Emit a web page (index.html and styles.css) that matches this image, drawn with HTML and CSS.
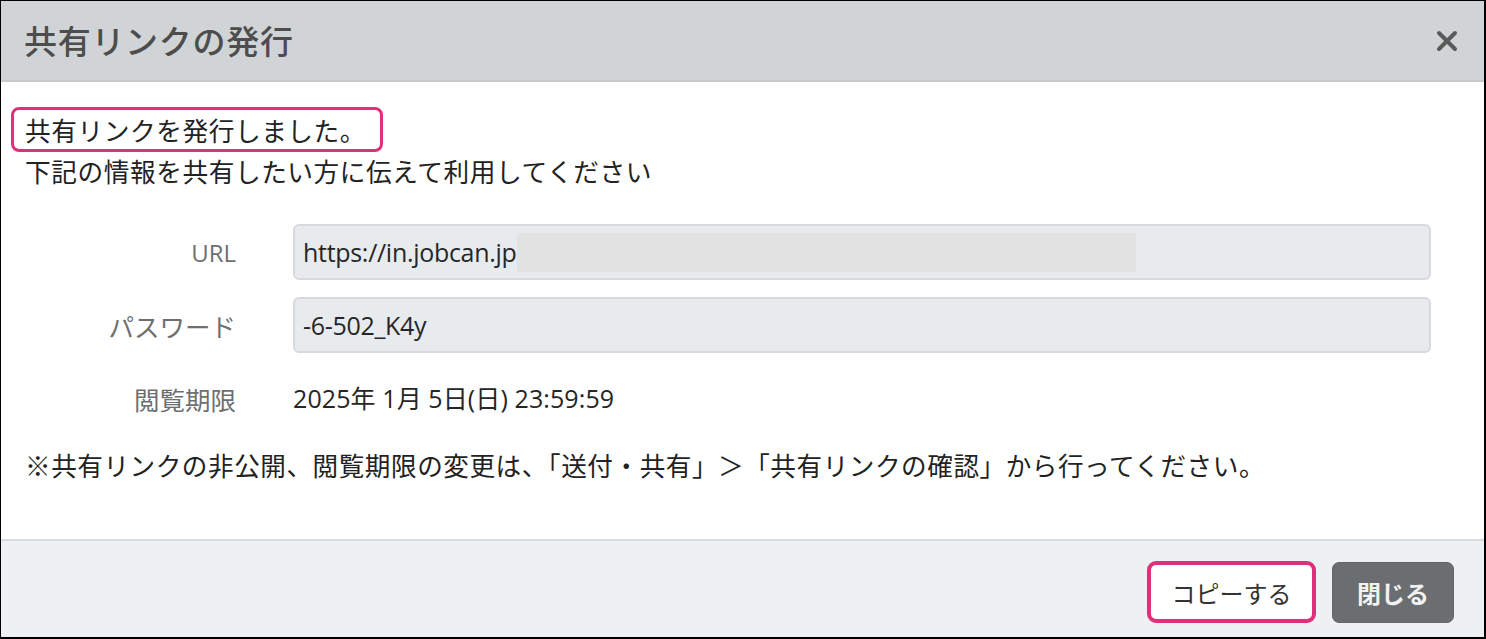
FILE: index.html
```html
<!DOCTYPE html>
<html lang="ja">
<head>
<meta charset="utf-8">
<title>共有リンクの発行</title>
<link rel="stylesheet" href="styles.css">
</head>
<body>
<div class="modal">
  <div class="modal-header">
    <h1 class="modal-title">共有リンクの発行</h1>
    <button class="close-x" aria-label="閉じる">
      <svg width="22" height="22" viewBox="0 0 22 22"><path d="M3 3 L19 19 M19 3 L3 19" stroke="#5a5a5a" stroke-width="4" stroke-linecap="round"/></svg>
    </button>
  </div>
  <div class="modal-body">
    <p class="msg"><span class="highlight">共有リンクを発行しました。</span></p>
    <p class="msg">下記の情報を共有したい方に伝えて利用してください</p>
    <div class="form">
      <div class="label label-latin">URL</div>
      <div class="field"><span class="field-text">https://in.jobcan.jp</span><span class="redact"></span></div>
      <div class="label">パスワード</div>
      <div class="field"><span class="field-text">-6-502_K4y</span></div>
      <div class="label">閲覧期限</div>
      <div class="value">2025年 1月 5日(日) 23:59:59</div>
    </div>
    <p class="note">※共有リンクの非公開、閲覧期限の変更は、「送付・共有」＞「共有リンクの確認」から行ってください。</p>
  </div>
  <div class="modal-footer">
    <button class="btn btn-copy">コピーする</button>
    <button class="btn btn-close">閉じる</button>
  </div>
</div>
</body>
</html>
```

FILE: styles.css
```css
* { box-sizing: border-box; }
html, body { margin: 0; padding: 0; background: #fff; }
body {
  font-family: "Open Sans", "Noto Sans CJK JP", sans-serif;
  color: #222;
}
.modal {
  width: 1486px;
  height: 639px;
  border: 1px solid #000;
  border-right-width: 2px;
  border-bottom-width: 2px;
  display: flex;
  flex-direction: column;
  background: #fff;
}
.modal-header {
  height: 81px;
  background: #d1d4d7;
  border-bottom: 2px solid #c6cacd;
  display: flex;
  align-items: center;
  justify-content: space-between;
  padding: 0 26px 0 23px;
  flex-shrink: 0;
}
.modal-title {
  margin: 0;
  font-family: "Noto Sans CJK JP", sans-serif;
  font-size: 33px;
  font-weight: 500;
  color: #4d4d4d;
  line-height: 1;
  letter-spacing: 0.7px;
}
.close-x {
  border: 0;
  background: transparent;
  padding: 0;
  display: flex;
}
.modal-body {
  flex: 1;
  padding: 27px 53px 0 24px;
}
.msg {
  margin: 0;
  font-family: "Noto Sans CJK JP", sans-serif;
  font-size: 25.7px;
  line-height: 41px;
  letter-spacing: 0.55px;
  color: #222;
}
.highlight {
  border: 3px solid #e0307a;
  border-radius: 8px;
  padding: 1px 14px 1px 11px;
  margin-left: -14px;
}
.form {
  display: grid;
  grid-template-columns: 211px 1fr;
  column-gap: 57px;
  row-gap: 17px;
  align-items: center;
  margin-top: 33px;
}
.label {
  text-align: right;
  font-family: "Noto Sans CJK JP", sans-serif;
  font-size: 25.5px;
  color: #6f6f6f;
}
.label-latin { font-family: "Open Sans", sans-serif; font-size: 24px; }
.field {
  height: 56px;
  background: #e8ebee;
  border: 2px solid #d6dadf;
  border-radius: 6px;
  display: flex;
  align-items: center;
  padding-left: 8px;
}
.field-text {
  font-family: "Open Sans", "Noto Sans CJK JP", sans-serif;
  font-size: 25px;
  color: #262626;
  letter-spacing: -0.3px;
}
.redact {
  display: inline-block;
  width: 619px;
  height: 39px;
  background: #e2e2e2;
}
.value {
  font-family: "Open Sans", "Noto Sans CJK JP", sans-serif;
  font-size: 25px;
  color: #262626;
  line-height: 56px;
  letter-spacing: 0.1px;
}
.note {
  margin: 18px 0 0 0;
  font-family: "Noto Sans CJK JP", sans-serif;
  font-size: 25.6px;
  line-height: 41px;
  letter-spacing: 0.55px;
  color: #222;
}
.modal-footer {
  height: 98px;
  background: #eef1f4;
  border-top: 2px solid #d9dcdf;
  display: flex;
  justify-content: flex-end;
  align-items: flex-start;
  gap: 16px;
  padding: 20px 30px 0 0;
  flex-shrink: 0;
}
.btn {
  font-family: "Noto Sans CJK JP", sans-serif;
  font-size: 24px;
  border-radius: 7px;
  cursor: pointer;
}
.btn-copy {
  width: 169px;
  height: 62px;
  background: #fff;
  border: 4px solid #e0307a;
  color: #333;
  border-radius: 9px;
}
.btn-close {
  width: 122px;
  height: 61px;
  margin-top: 1px;
  background: #6b6e71;
  border: 1px solid #63666a;
  color: #f2f2f2;
  font-weight: 700;
}
```
